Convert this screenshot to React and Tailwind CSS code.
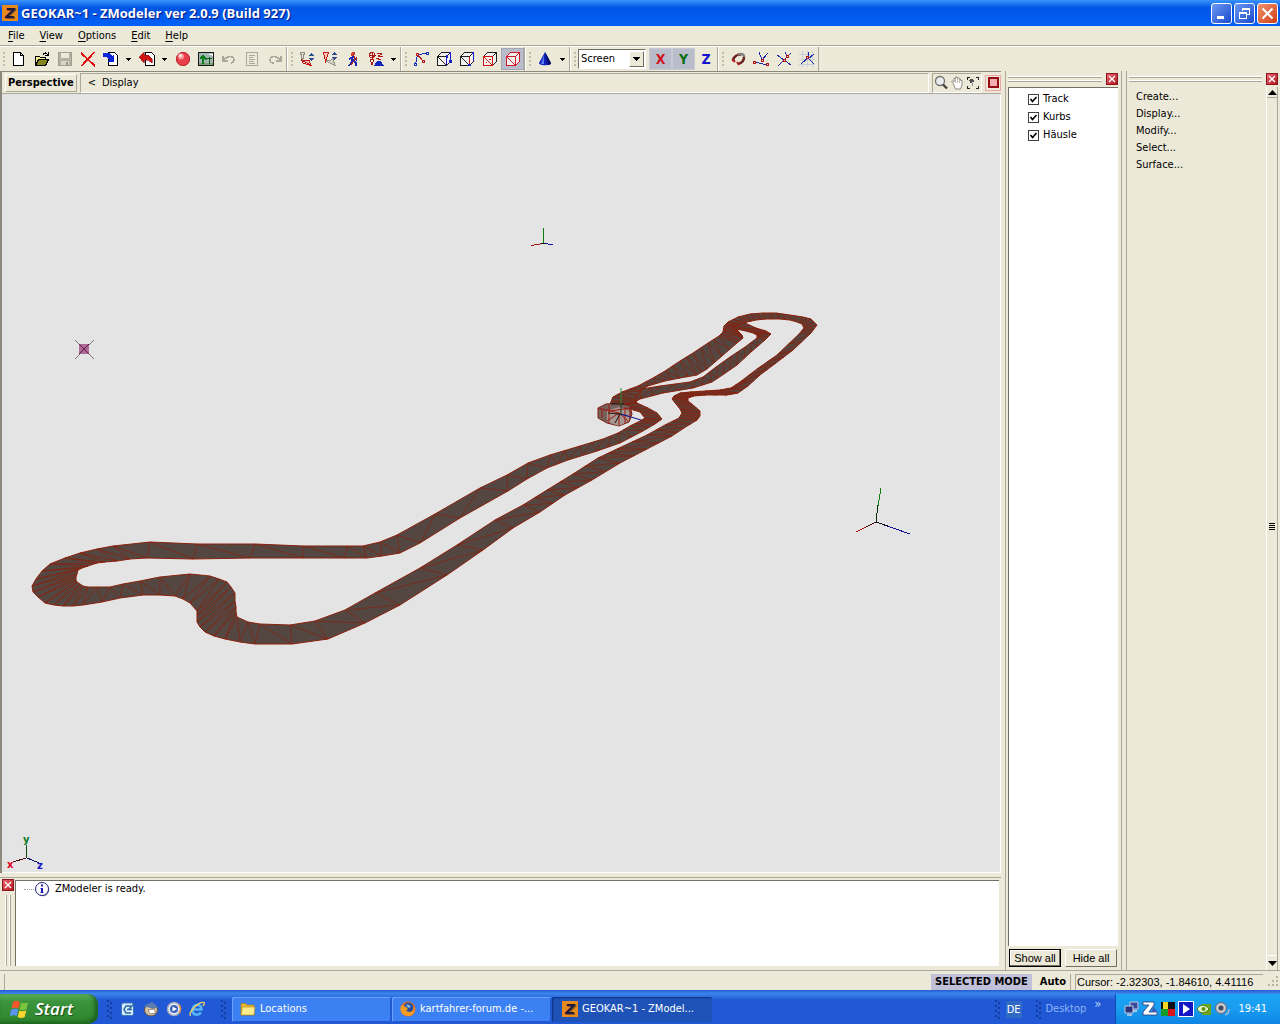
import { useState } from "react";
import { clsx } from "clsx";

/* ---------- track geometry: [left x, left y, right x, right y] ---------- */

const mainLoop = [
  [733, 331, 723, 332], [739, 328, 724, 326], [743, 325, 728, 322], [747, 322, 738, 317],
  [756, 320, 750, 314], [766, 319, 763, 313], [780, 319, 776, 313], [790, 320, 790, 315],
  [797, 322, 803, 317], [802, 324, 811, 319], [804, 328, 817, 325], [799, 334, 811, 333],
  [777, 355, 793, 350], [757, 369, 776, 363], [740, 382, 760, 375], [731, 388, 748, 386],
  [720, 390, 738, 393], [705, 391, 727, 395], [690, 392, 706, 395], [680, 393, 694, 396],
  [674, 396, 688, 398], [672, 399, 688, 401], [676, 404, 693, 405], [680, 409, 700, 411],
  [682, 413, 700, 416], [679, 418, 697, 420], [665, 425, 684, 428], [647, 435, 672, 436],
  [617, 449, 647, 449], [598, 458, 620, 463], [573, 474, 592, 480], [547, 490, 565, 495],
  [523, 505, 540, 512], [495, 520, 513, 528], [457, 545, 483, 550], [420, 568, 447, 575],
  [375, 593, 400, 605], [345, 610, 365, 623], [315, 621, 328, 639], [290, 625, 292, 644],
  [260, 624, 255, 644], [248, 622, 240, 642], [237, 617, 225, 639], [236, 612, 214, 636],
  [236, 607, 205, 632], [235, 601, 200, 627], [235, 593, 197, 622], [231, 587, 197, 616],
  [227, 582, 197, 611], [219, 579, 190, 603], [210, 576, 183, 599], [190, 574, 175, 596],
  [160, 577, 160, 595], [140, 581, 143, 595], [123, 584, 120, 598], [110, 587, 102, 602],
  [97, 587, 83, 605], [88, 587, 73, 606], [83, 586, 63, 606], [80, 584, 54, 605],
  [77, 582, 45, 603], [76, 580, 38, 597], [76, 577, 33, 592], [77, 574, 32, 586],
  [78, 570, 36, 579], [82, 568, 42, 571], [88, 566, 50, 564], [97, 563, 65, 558],
  [105, 562, 80, 553], [117, 561, 97, 549], [130, 559, 113, 546], [147, 558, 150, 542],
  [193, 559, 197, 544], [250, 558, 255, 544], [303, 558, 303, 546], [345, 558, 347, 546],
  [367, 558, 363, 546], [382, 556, 380, 542], [400, 553, 397, 535], [420, 543, 435, 514],
  [460, 518, 480, 488], [508, 491, 507, 475], [527, 479, 528, 463], [547, 468, 550, 455],
  [568, 460, 580, 446], [597, 451, 603, 439], [620, 443, 618, 433], [643, 431, 630, 426],
  [655, 424, 640, 421], [662, 419, 645, 418], [657, 413, 640, 412], [648, 408, 627, 408],
  [637, 403, 610, 405], [632, 399, 613, 397],
];

const pitStraight = [
  [610, 405, 637, 403], [613, 397, 634, 399], [622, 392, 640, 391], [638, 386, 648, 386],
  [653, 378, 665, 381], [665, 371, 680, 378], [680, 361, 697, 375], [693, 353, 707, 369],
  [708, 343, 722, 356], [719, 336, 737, 343], [723, 332, 743, 338], [726, 328, 742, 335],
  [730, 325, 738, 331],
];

const infield = [
  [632, 394, 632, 404], [642, 389, 640, 399], [660, 386, 663, 393], [690, 382, 693, 388],
  [703, 377, 712, 382], [716, 367, 724, 374], [730, 357, 737, 365], [745, 347, 751, 352],
  [757, 338, 765, 340], [757, 335, 771, 334], [753, 333, 766, 331], [742, 330, 756, 328],
  [730, 329, 745, 323],
];

function Strip({ pairs }) {
  const left = pairs.map((p) => `${p[0]},${p[1]}`);
  const right = pairs.map((p) => `${p[2]},${p[3]}`);
  const outline = [...left, ...[...right].reverse()].join(" ");
  let zigzag = "";
  pairs.forEach((p, i) => {
    zigzag += `${p[0]},${p[1]} ${p[2]},${p[3]} `;
    // split the long quads once more so the far part looks denser
    const next = pairs[i + 1];
    if (next && p[0] > 540 && p[1] < 500) {
      const mx = (p[0] + next[0]) / 2;
      const my = (p[1] + next[1]) / 2;
      zigzag += `${mx},${my} ${(p[2] + next[2]) / 2},${(p[3] + next[3]) / 2} `;
    }
  });
  return (
    <g stroke="#8a200c" strokeWidth="1" strokeLinejoin="round">
      <polygon points={outline} fill="#544741" />
      <polyline points={zigzag} fill="none" strokeWidth="0.7" />
    </g>
  );
}

function Scene() {
  return (
    <svg viewBox="2 94 998 778" className="block h-full w-full" role="img" aria-label="Perspective view">
      <Strip pairs={mainLoop} />
      <Strip pairs={infield} />
      <Strip pairs={pitStraight} />

      {/* building */}
      <path d="M632 413l9 1 1 5-8-1z" fill="#e4e4e4" />
      <path d="M598 408l8-4 14-1 10 3 2 8-3 8-10 4-12-3-9-5z" fill="#75615a" stroke="#801c10" />
      <path d="M607 411l12-4 11 4-1 10-10 5-12-4z" fill="#a89791" />
      <path d="M598 408l12 3 20-3M609 405v18M619 426v-13l-12 8M619 413l-13-3M619 413l10 9M630 408v12M602 409v9M625 407v17" fill="none" stroke="#9c1a12" />
      <path d="M611 404h13M608 413l11 1 9 2M620 414l-5 9" fill="none" stroke="#1c1410" />
      <path d="M621 388v16" stroke="#2c8a2c" />
      <path d="M621 404v10" stroke="#123c12" />
      <path d="M621 414l20 6" stroke="#20209a" strokeWidth="1.3" />

      {/* lights and helpers */}
      <g fill="none" shapeRendering="crispEdges">
        <path d="M543.5 228v15" stroke="#0c7a0c" />
        <path d="M531 245.500l12-2" stroke="#a01414" />
        <path d="M543 243.500l10 1" stroke="#1414a0" />
        <path d="M541 243.500h5" stroke="#101010" />
        <path d="M881 488l-3 18" stroke="#108010" />
        <path d="M878 505l-2 17" stroke="#0c300c" />
        <path d="M876 522l-20 10" stroke="#b01414" />
        <path d="M876 522l-10 5" stroke="#3c1010" />
        <path d="M876 522l34 12" stroke="#101090" />
        <path d="M876 522l12 4" stroke="#101020" />
      </g>
      <rect x="79" y="344" width="10" height="10" fill="#b06a97" />
      <path d="M75 340l19 19M94 340l-19 19" stroke="#85707c" />
      <path d="M79 344l10 10M89 344l-10 10" stroke="#6c1c54" />

      {/* axis tripod */}
      <g fill="none" shapeRendering="crispEdges">
        <path d="M26.500 845v13" stroke="#104810" />
        <path d="M26 858l-13 4" stroke="#501010" />
        <path d="M27 858l12 5" stroke="#101060" />
      </g>
      <g className="font-['DejaVu_Sans'] text-[10px] font-bold">
        <text x="23" y="843" fill="#0a7a1e">y</text>
        <text x="7" y="868" fill="#e0001c">x</text>
        <text x="37" y="869" fill="#1414c8">z</text>
      </g>
    </svg>
  );
}

/* ---------- icons ---------- */

function Svg({ children, size = 16, crisp = true }) {
  return (
    <svg width={size} height={size} viewBox="0 0 16 16" fill="none" className="shrink-0" shapeRendering={crisp ? "crispEdges" : "auto"} aria-hidden="true">
      {children}
    </svg>
  );
}

const Page = () => <path d="M2.500 1.500h7l3 3v10h-10zM9.500 1.500v3h3" fill="#fff" stroke="#000" />;

const Cube = ({ c = "#202020", e = "#1818c8" }) => (
  <>
    <path d="M1.500 5.500l4-4h9v9l-4 4h-9z" fill="#f4f2ec" stroke={c} />
    <path d="M1.500 5.500h9v9M10.500 5.500l4-4M1.500 5.500l9 9" stroke={c} />
    <path d="M10.500 6v8M14.500 2v8" stroke={e} />
  </>
);

const icons = {
  new: <Page />,
  open: (
    <>
      <path d="M1.500 14.500v-9h4l1 1h5v2" fill="#f6f08c" stroke="#000" />
      <path d="M1.500 14.500l3-6h10l-3 6z" fill="#86841c" stroke="#000" />
      <path d="M9 3.500c2-3 4-1 5 1M14.500 1v3.500H11" stroke="#000" />
    </>
  ),
  save: (
    <>
      <path d="M1.500 1.500h13v13h-13z" fill="#b4b1a2" stroke="#a09d8f" />
      <path d="M4 2h8v5H4z" fill="#ece9d8" />
      <path d="M4 10h8v4H4z" fill="#d8d5c6" />
      <path d="M9 11h2v3H9z" fill="#9a978a" />
    </>
  ),
  del: <path d="M1 2l14 13M14.500 1L1.500 15" stroke="#e01010" strokeWidth="1.800" />,
  imp: (
    <>
      <path d="M5.500 1.500h6l3 3v10h-9z" fill="#fff" stroke="#000" />
      <path d="M0 2h6l3 3 2-2v8H4l2-2-2-3H0z" fill="#0c28d8" />
    </>
  ),
  exp: (
    <>
      <path d="M6.500 1.500h6l3 3v10h-9z" fill="#fff" stroke="#000" />
      <path d="M0 6l5-5v3h4l4 4v4l-4-3H5v3z" fill="#d01414" stroke="#801010" strokeWidth=".6" />
    </>
  ),
  sphere: (
    <>
      <circle cx="8" cy="8" r="7" fill="#e8404a" />
      <circle cx="8" cy="8" r="6.500" stroke="#b8242c" />
      <circle cx="6" cy="5.500" r="3" fill="#fc9c9c" />
      <circle cx="5.500" cy="4.500" r="1.300" fill="#fff" />
    </>
  ),
  env: (
    <>
      <path d="M.5 1.500h15v13H.5z" fill="#a4b4b0" stroke="#181818" />
      <path d="M1 12h14v2H1z" fill="#7c9c74" />
      <path d="M5 4v9M2 8l3-3 4 4" stroke="#0c7c1c" strokeWidth="2" />
      <path d="M11.500 6v7M9 8l3-1 2 1" stroke="#0c5c1c" />
      <path d="M11 3h3v2" stroke="#fff" />
    </>
  ),
  undo: <path d="M2 5v5h5M2.500 9.500C5 6 10 4 12.500 7c1.500 3-.5 5-3 5" stroke="#aca899" strokeWidth="1.500" />,
  redo: <path d="M14 5v5H9M13.500 9.500C11 6 6 4 3.500 7c-1.500 3 .5 5 3 5" stroke="#aca899" strokeWidth="1.500" />,
  doc: <path d="M2.500 1.500h11v13h-11zM5 4.500h6M5 6.500h4M5 8.500h6M5 10.500h5M5 12.500h6" stroke="#aca899" />,
  boneA: (
    <>
      <path d="M1.500 1.500h4l-2 8z" fill="#dcd8cc" stroke="#98918a" />
      <path d="M3 9l9 5.500-2-5z" fill="#f4c4bc" stroke="#c41414" />
      <path d="M2 8l2 4 9 3" stroke="#c41414" />
      <path d="M9 5l3-3 3 3zM9 7h6l-3 3z" fill="#2c4c8c" />
    </>
  ),
  boneB: (
    <>
      <path d="M1.500 1.500h5l-3 9z" fill="#f4c4bc" stroke="#c41414" />
      <path d="M4 10l9 4.500-2-6z" fill="#dcd8cc" stroke="#98958a" />
      <path d="M9 4l3-3 3 3zM9 6h6l-3 3z" fill="#2c4c8c" />
    </>
  ),
  walk: (
    <>
      <circle cx="8" cy="3" r="2" fill="#d03c30" />
      <path d="M8 5L7 10l-3 5M8 9l3 3v3M4 8l4-2 4 3" stroke="#1824b0" strokeWidth="1.600" />
      <path d="M9 5v5l-3 4M11 6l1 3" stroke="#c42018" />
    </>
  ),
  anim: (
    <>
      <circle cx="4" cy="4" r="2.500" stroke="#b01818" />
      <path d="M1 4h7M4 1v7M9 2l5 1-4 2 5 1M2 8h4l-2 6zM8 7l5 2" stroke="#b01818" />
      <path d="M6 15l3-5h4l3 5z" fill="#1428c0" />
    </>
  ),
  verts: (
    <>
      <path d="M2.500 13.500l2-10 9-1" stroke="#1830b8" />
      <path d="M4 3l6 7" stroke="#b01414" />
      <path d="M1.500 12.500h2v2h-2zM13.500 1.500h2v2h-2z" fill="#fff" stroke="#1830b8" />
      <path d="M3.500 2.500h2v2h-2zM9.500 9.500h2v2h-2z" fill="#f8dcd0" stroke="#c01414" />
    </>
  ),
  cubeV: (
    <>
      <Cube />
      <path d="M10 4h2v3h-2zM13 1h2v2h-2zM13 9h3v3h-3z" fill="#1824c8" />
    </>
  ),
  cubeE: (
    <>
      <Cube />
      <path d="M10.500 6v8" stroke="#d01414" />
      <path d="M13 1h2v2h-2zM9 13h3v2H9z" fill="#1824c8" />
    </>
  ),
  cubeF: (
    <>
      <Cube e="#202020" />
      <path d="M1.500 5.500h9v9h-9zl9 9M4 11h1M7 8h2" stroke="#d01414" />
    </>
  ),
  cubeO: <Cube c="#d4182c" e="#d4182c" />,
  cone: (
    <>
      <path d="M8 1L2 12c0 3 12 3 12 0z" fill="#1020b8" />
      <path d="M7 4L4 13h3z" fill="#5c7cf4" />
      <path d="M8 1l6 11c0 1-1 2-3 2z" fill="#060c60" />
    </>
  ),
  magnet: (
    <>
      <path d="M4 10c-2-2 1-5 4-6 1-1 2-1 2 1M8 13c4-1 6-4 6-7" stroke="#6c2420" strokeWidth="2.500" />
      <path d="M8 4c3-2 6-1 6 2" stroke="#84807c" strokeWidth="2.500" />
      <path d="M2 8l3 3M7 11l2 3" stroke="#b02420" strokeWidth="2" />
      <path d="M5 8l3-3" stroke="#e8e4e0" />
    </>
  ),
  snapV: (
    <>
      <path d="M6 1l3 8 6-7M2 11l12 3" stroke="#1c28a8" />
      <path d="M8.500 8.500h2v2h-2zM.5 10.500h2v2h-2zM13.500 12.500h2v2h-2z" fill="#f8dcd0" stroke="#b01414" />
    </>
  ),
  snapE: (
    <>
      <path d="M1 4l14 10M2 15L15 2M9 1l3 5" stroke="#1c28a8" />
      <path d="M7.500 8.500h2v2h-2zM10.500 4.500h2v2h-2z" fill="#f8dcd0" stroke="#b01414" />
    </>
  ),
  snapG: (
    <>
      <path d="M0 3.500h16M0 8.500h16M0 13.500h16M3.500 0v16M8.500 0v16M13.500 0v16" stroke="#c8cfdc" />
      <path d="M9 1v6l6 6M9 7l-7 6M15 3L9 8" stroke="#1c28a8" />
      <path d="M7.500 5.500h2v2h-2z" fill="#f8dcd0" stroke="#b01414" />
    </>
  ),
};

function ZLogo() {
  return (
    <span className="grid size-4 shrink-0 place-items-center bg-[#e88a1c] font-['DejaVu_Sans'] text-[14px]/[16px] font-bold italic text-[#221a3c] [text-shadow:1px_1px_0_#8c5428]">
      Z
    </span>
  );
}

function CloseX({ label }) {
  return (
    <button aria-label={label} className="grid size-3 shrink-0 place-items-center border border-[#8c1420] bg-linear-to-br from-[#e8606c] to-[#b4101c]">
      <svg width="8" height="8" viewBox="0 0 8 8" aria-hidden="true">
        <path d="M1 1l6 6M7 1L1 7" stroke="#fff" strokeWidth="1.400" />
      </svg>
    </button>
  );
}

/* ---------- toolbar ---------- */

const toolbarGroups = [
  ["new", "open", "save", "del", "imp", "v", "exp", "v", "sphere", "env", "undo", "doc", "redo"],
  ["boneA", "boneB", "walk", "anim", "v"],
  ["verts", "cubeV", "cubeE", "cubeF", "cubeO"],
  ["cone", "v"],
];

function Group({ children, first }) {
  return (
    <div className={clsx("flex h-full items-center border-r border-[#aca899]", !first && "border-l border-l-white")}>
      <span className="flex w-[7px] flex-col items-center gap-[2px]">
        {[0, 1, 2, 3].map((i) => (
          <i key={i} className="size-[2px] bg-[#c0bca8]" />
        ))}
      </span>
      {children}
    </div>
  );
}

function Tool({ name, pressed }) {
  if (name === "v") {
    return (
      <button aria-label="More" className="grid h-full w-[13px] place-items-center">
        <svg width="5" height="3" viewBox="0 0 5 3" shapeRendering="crispEdges" aria-hidden="true">
          <path d="M0 0h5L2.500 3z" fill="#000" />
        </svg>
      </button>
    );
  }
  return (
    <button aria-label={name} className={clsx("grid h-[22px] w-[23px] place-items-center", pressed && "border border-[#a4a8b4] bg-[#b9bdcb]")}>
      <Svg crisp={name !== "sphere" && name !== "cone" && name !== "magnet"}>{icons[name]}</Svg>
    </button>
  );
}

function Toolbar() {
  const [space, setSpace] = useState("Screen");
  return (
    <div className="flex h-[25px] items-center border-t border-white">
      {toolbarGroups.map((names, i) => (
        <Group key={i} first={i === 0}>
          {names.map((n, j) => (
            <Tool key={j} name={n} pressed={n === "cubeO"} />
          ))}
        </Group>
      ))}
      <Group>
        <div className="relative mr-[3px]">
          <select
            aria-label="Coordinate space"
            value={space}
            onChange={(e) => setSpace(e.target.value)}
            className="block h-5 w-[68px] appearance-none border border-t-[#716f64] border-r-white border-b-white border-l-[#716f64] bg-white pl-[2px] text-[11px]/[16px]"
          >
            <option>Screen</option>
            <option>World</option>
          </select>
          <span className="pointer-events-none absolute top-[2px] right-[2px] grid h-4 w-[15px] place-items-center border border-t-white border-r-[#716f64] border-b-[#716f64] border-l-white bg-[#ece9d8]">
            <svg width="7" height="4" viewBox="0 0 7 4" shapeRendering="crispEdges" aria-hidden="true">
              <path d="M0 0h7L3.500 4z" fill="#000" />
            </svg>
          </span>
        </div>
        <button className="h-[22px] w-[23px] border border-[#c8cad4] bg-[#b9bdcb] font-['DejaVu_Sans_Condensed'] text-[14px]/[20px] font-bold text-[#d0101c]">X</button>
        <button className="h-[22px] w-[23px] border border-[#c8cad4] bg-[#b9bdcb] font-['DejaVu_Sans_Condensed'] text-[14px]/[20px] font-bold text-[#0c6c14]">Y</button>
        <button className="h-[22px] w-[22px] font-['DejaVu_Sans_Condensed'] text-[14px]/[20px] font-bold text-[#1414d0]">Z</button>
      </Group>
      <Group>
        {["magnet", "snapV", "snapE", "snapG"].map((n) => (
          <Tool key={n} name={n} />
        ))}
      </Group>
    </div>
  );
}

/* ---------- window parts ---------- */

function TitleBar() {
  const btn = "grid size-[21px] place-items-center rounded-[3px] border border-white";
  return (
    <header className="flex h-[26px] items-center gap-[2px] bg-linear-to-b from-[#3c94fc] via-[#0054e3] via-30% to-[#0461f8] px-[2px]">
      <ZLogo />
      <h1 className="grow pl-px font-['Open_Sans'] text-[13px]/[20px] font-bold whitespace-nowrap text-white [text-shadow:1px_1px_1px_#0a1883]">
        GEOKAR~1 - ZModeler ver 2.0.9 (Build 927)
      </h1>
      <button aria-label="Minimize" className={clsx(btn, "bg-linear-to-br from-[#6c98f4] to-[#1c48cc]")}>
        <svg width="13" height="13" viewBox="0 0 13 13" shapeRendering="crispEdges"><path d="M2 9h7v3H2z" fill="#fff" /></svg>
      </button>
      <button aria-label="Restore" className={clsx(btn, "bg-linear-to-br from-[#6c98f4] to-[#1c48cc]")}>
        <svg width="13" height="13" viewBox="0 0 13 13" fill="none" stroke="#fff" shapeRendering="crispEdges">
          <path d="M4.500 4V1.500h7v6H9M4 2h8M1.500 5.500h7v6h-7zM1 6h8" />
        </svg>
      </button>
      <button aria-label="Close" className={clsx(btn, "bg-linear-to-br from-[#f0906c] to-[#d03c10]")}>
        <svg width="13" height="13" viewBox="0 0 13 13" stroke="#fff" strokeWidth="2"><path d="M1.500 1.500l10 10M11.500 1.500l-10 10" /></svg>
      </button>
    </header>
  );
}

function MenuBar() {
  return (
    <nav className="flex h-5 items-center gap-[15px] border-b border-[#aca899] pt-px pl-2">
      {["File", "View", "Options", "Edit", "Help"].map((m) => (
        <button key={m}>
          <u className="underline-offset-2">{m[0]}</u>
          {m.slice(1)}
        </button>
      ))}
    </nav>
  );
}

function ViewHeader() {
  return (
    <div className="flex h-[22px] shrink-0 items-center border-b border-[#aca899]">
      <button className="ml-[3px] h-[18px] border border-t-white border-r-[#aca899] border-b-[#aca899] border-l-white px-[2px] leading-4 font-bold">
        Perspective
      </button>
      <div className="ml-[3px] flex h-5 grow items-center gap-[6px] border border-t-[#aca899] border-r-white border-b-white border-l-[#aca899] pl-[7px]">
        <span>&lt;</span>
        <button>Display</button>
      </div>
      <div className="ml-[3px] flex h-5 items-center border border-t-[#aca899] border-r-white border-b-white border-l-[#aca899]">
        <button aria-label="Zoom">
          <Svg crisp={false}>
            <circle cx="7" cy="6" r="4.500" fill="#e8eef0" stroke="#70706c" strokeWidth="1.300" />
            <path d="M10 9.500l4 4" stroke="#444" strokeWidth="2.400" />
          </Svg>
        </button>
        <button aria-label="Pan">
          <Svg crisp={false}>
            <path d="M4.500 9L2.500 6.500l1-.8L5 7V3.500h1.500V2H8v1h2v1h1.500v1.500H13V10l-1.500 4h-5z" fill="#fff" stroke="#8c8a80" />
            <path d="M6.500 3.500V8M8.500 3v5M10.500 4v4" stroke="#a8a69a" strokeWidth=".8" />
          </Svg>
        </button>
        <button aria-label="Fit">
          <Svg>
            <path d="M2.500 5V2.500H5M11 2.500h2.500V5M13.500 11v2.500H11M5 13.500H2.500V11" stroke="#202020" />
            <path d="M4 5l2-1 3 1v2H7l-1 2z" fill="#505050" />
            <path d="M7.500 8v3" stroke="#909090" />
          </Svg>
        </button>
      </div>
      <button aria-label="Maximize view" className="ml-[3px] grid size-4 place-items-center border border-[#e8a8a8]">
        <span className="size-[11px] border-2 border-[#980c14] bg-[#f0b0b0]" />
      </button>
    </div>
  );
}

function Grooves() {
  return (
    <div className="flex grow flex-col gap-[2px]">
      <i className="h-[2px] border-t border-b border-t-white border-b-[#aca899]" />
      <i className="h-[2px] border-t border-b border-t-white border-b-[#aca899]" />
    </div>
  );
}

function LogPane() {
  return (
    <section className="flex h-[93px] shrink-0 border-t border-[#aca899]">
      <div className="flex w-[15px] flex-col items-center gap-1 pt-px">
        <CloseX label="Close log" />
        <div className="mb-1 flex grow gap-[2px]">
          <i className="w-[2px] border-r border-l border-r-[#aca899] border-l-white" />
          <i className="w-[2px] border-r border-l border-r-[#aca899] border-l-white" />
        </div>
      </div>
      <ul className="mt-[2px] mr-[2px] mb-1 grow border-t border-l border-[#716f64] bg-white">
        <li className="flex h-4 items-center pl-2">
          <i className="w-[10px] border-t border-dotted border-[#a0a0a0]" />
          <svg width="16" height="16" viewBox="0 0 16 16" aria-hidden="true">
            <circle cx="8.800" cy="8.800" r="6.500" fill="#9090b8" />
            <circle cx="8" cy="8" r="6.500" fill="#fff" stroke="#20207c" />
            <path d="M7 3.500h2v2H7zM6.500 7H9v5H7V8h-.5zM6.500 11h3v1h-3z" fill="#1c1cb4" />
          </svg>
          <span className="pl-[5px]">ZModeler is ready.</span>
        </li>
      </ul>
    </section>
  );
}

function ObjectPanel() {
  const [shown, setShown] = useState({ Track: true, Kurbs: true, Häusle: true });
  const setAll = (on) => setShown({ Track: on, Kurbs: on, Häusle: on });
  return (
    <aside className="flex w-[117px] shrink-0 flex-col border-r border-l border-[#aca899] pr-[3px] pl-[2px]">
      <div className="flex h-4 items-center gap-1">
        <Grooves />
        <CloseX label="Close objects" />
      </div>
      <ul className="flex grow flex-col border-t border-l border-[#716f64] bg-white pt-[2px] pl-[19px]">
        {Object.keys(shown).map((name) => (
          <li key={name}>
            <label className="flex h-[18px] items-center gap-1">
              <span className="grid">
                <input
                  type="checkbox"
                  checked={shown[name]}
                  onChange={() => setShown({ ...shown, [name]: !shown[name] })}
                  className="col-start-1 row-start-1 size-[11px] appearance-none border border-[#404040] bg-white"
                />
                {shown[name] && (
                  <svg viewBox="0 0 11 11" className="pointer-events-none col-start-1 row-start-1 size-[11px]">
                    <path d="M2.500 5l2 2.500L8.500 3" fill="none" stroke="#000" strokeWidth="1.600" />
                  </svg>
                )}
              </span>
              {name}
            </label>
          </li>
        ))}
      </ul>
      <div className="flex h-6 items-center gap-1 px-px">
        <button onClick={() => setAll(true)} className="h-[18px] flex-1 border border-black font-['Liberation_Sans'] leading-4 whitespace-nowrap shadow-[inset_-1px_-1px_0_#716f64,inset_1px_1px_0_#fff]">
          Show all
        </button>
        <button onClick={() => setAll(false)} className="h-[18px] flex-1 border border-t-white border-r-[#716f64] border-b-[#716f64] border-l-white font-['Liberation_Sans'] leading-4 whitespace-nowrap">
          Hide all
        </button>
      </div>
    </aside>
  );
}

function CommandPanel() {
  return (
    <aside className="flex w-[154px] shrink-0 flex-col border-l border-[#aca899] pl-[2px]">
      <div className="flex h-4 items-center gap-1 pr-[2px]">
        <Grooves />
        <CloseX label="Close commands" />
      </div>
      <div className="flex grow">
        <ul className="grow pt-px pl-[7px]">
          {["Create...", "Display...", "Modify...", "Select...", "Surface..."].map((c) => (
            <li key={c} className="h-[17px]">
              <button className="leading-[17px]">{c}</button>
            </li>
          ))}
        </ul>
        <div className="mr-[2px] flex w-3 flex-col items-center justify-between border-r border-l border-r-[#aca899] border-l-white">
          <button aria-label="Scroll up" className="grid h-[11px] w-full place-items-center border-b border-[#aca899]">
            <svg width="9" height="5" viewBox="0 0 9 5"><path d="M0 5h9L4.500 0z" /></svg>
          </button>
          <span className="flex flex-col gap-px">
            <i className="h-px w-[6px] bg-black" />
            <i className="h-px w-[6px] bg-black" />
            <i className="h-px w-[6px] bg-black" />
            <i className="h-px w-[6px] bg-black" />
          </span>
          <button aria-label="Scroll down" className="grid h-[15px] w-full place-items-center border-t border-white">
            <svg width="9" height="5" viewBox="0 0 9 5"><path d="M0 0h9L4.500 5z" /></svg>
          </button>
        </div>
      </div>
    </aside>
  );
}

function StatusBar() {
  return (
    <footer className="flex h-5 items-center justify-end gap-1 border-t border-[#aca899] pt-[2px] pl-1">
      <i className="mr-auto h-4 border-l border-[#aca899]" />
      <span className="h-4 bg-[#c0c0d8] px-1 leading-4 font-bold">SELECTED MODE</span>
      <button className="h-4 border-r border-[#aca899] px-1 leading-4 font-bold">Auto</button>
      <span className="h-4 w-[188px] border-t border-l border-[#aca899] pl-px font-['Liberation_Sans'] leading-[14px] whitespace-nowrap">
        Cursor: -2.32303, -1.84610, 4.41116
      </span>
      <svg width="13" height="13" viewBox="0 0 13 13" fill="#b8b4a2" aria-hidden="true">
        <path d="M9 1h2v2H9zM9 5h2v2H9zM9 9h2v2H9zM5 5h2v2H5zM5 9h2v2H5zM1 9h2v2H1z" />
      </svg>
    </footer>
  );
}

/* ---------- taskbar ---------- */

function TaskGrip() {
  return (
    <svg width="7" height="20" viewBox="0 0 7 20" fill="#143c9c" shapeRendering="crispEdges" className="shrink-0" aria-hidden="true">
      <path d="M1 1h2v2H1zM1 6h2v2H1zM1 11h2v2H1zM1 16h2v2H1zM4 3h2v2H4zM4 8h2v2H4zM4 13h2v2H4zM4 18h2v2H4z" />
    </svg>
  );
}

const Folder = () => (
  <Svg crisp={false}>
    <path d="M1 2.500h5l1 1.500h7v10H1z" fill="#e8b830" stroke="#a47c14" strokeWidth=".6" />
    <path d="M1 14l1.500-8H15l-1 8z" fill="#fcec8c" stroke="#b48c1c" strokeWidth=".6" />
  </Svg>
);

const Firefox = () => (
  <Svg crisp={false}>
    <circle cx="8" cy="8" r="7.500" fill="#e8701c" />
    <circle cx="8.500" cy="6.500" r="5" fill="#284c9c" />
    <path d="M6 4c2-1 4 0 5 2l-3 1z" fill="#7cb4e0" />
    <path d="M1 5c2-1 3 0 5 1l2 2-2 2 4 1c3 0 4-3 3-6 3 4 1 10-5 10S-.5 10 1 5z" fill="#f49c24" />
  </Svg>
);

const quickIcons = [
  ["Show desktop", <>
    <rect x="1.500" y="2" width="12" height="12.500" rx="2" fill="#d8ecfc" stroke="#3c78b8" />
    <path d="M11 5H6L4 8.500 6 12h5M7 8.500h5M15 2l-6 6" stroke="#2868a8" strokeWidth="1.500" />
  </>],
  ["Mail", <>
    <ellipse cx="8" cy="9" rx="6.500" ry="6" fill="#d8c4a4" stroke="#5c5044" />
    <path d="M1 5l8-4 6 5-5 2z" fill="#5c7cac" />
    <path d="M5 9l6-1 2 4-6 1z" fill="#fff" stroke="#806848" strokeWidth=".7" />
  </>],
  ["Media player", <>
    <circle cx="8" cy="8" r="6.500" fill="#e8ecf4" stroke="#9ca8c0" strokeWidth="1.500" />
    <circle cx="8" cy="8" r="4" fill="#3860b8" />
    <path d="M6.500 5.500L11 8l-4.500 2.500z" fill="#fff" />
    <path d="M13 4a6 6 0 010 8" stroke="#e8842c" strokeWidth="1.400" />
  </>],
  ["Internet Explorer", <>
    <path d="M3.500 8.500h9c0-6-8-6-9 0-.5 6 6 6.500 8.500 3" stroke="#58b4f4" strokeWidth="2.600" />
    <path d="M1.500 15C-1 11 10 0 15 1.500c1 .8 0 2-1 3.500" stroke="#f0d45c" strokeWidth="1.300" />
  </>],
];

const trayIcons = [
  ["Network", <>
    <path d="M6 1h8v7H6z" fill="#3c4c9c" stroke="#c4cce4" />
    <path d="M1 5h8v7H1z" fill="#28347c" stroke="#c4cce4" />
    <path d="M3 14h5M9 10h4" stroke="#d0d4e0" strokeWidth="1.500" />
  </>],
  ["ZoneAlarm", <>
    <path d="M1 1h11v3L7 11h8v3H1v-3l6-7H1z" fill="#fff" stroke="#283878" strokeWidth=".8" />
    <path d="M11 5l4 6h-5z" fill="#3c5cb0" />
  </>],
  ["Antivirus", <>
    <path d="M1 1h7v7H1z" fill="#f4d41c" /><path d="M8 1h7v7H8z" fill="#101010" />
    <path d="M1 8h7v7H1z" fill="#149c28" /><path d="M8 8h7v7H8z" fill="#d8141c" />
    <path d="M1 1h2v7H1z" fill="#101010" />
  </>],
  ["Player", <>
    <path d="M.5 .5h15v15H.5z" fill="#1418c4" stroke="#fff" />
    <path d="M5 3l7 5-7 5z" fill="#fff" />
  </>],
  ["NVIDIA", <>
    <path d="M6 3h9v11H6z" fill="#6ca41c" />
    <path d="M1 8c3-5 8-5 12 0-4 5-9 5-12 0z" fill="#e8f4c4" stroke="#4c7c14" />
    <circle cx="7.500" cy="8" r="2" fill="#5c9414" />
  </>],
  ["Volume", <>
    <circle cx="7" cy="7" r="5.500" fill="#c4c8d0" stroke="#606878" />
    <circle cx="7" cy="7" r="2.500" fill="#404858" />
    <path d="M11 14c3-1 4-3 4-6" stroke="#b4c4dc" strokeWidth="1.300" />
  </>],
];

function Taskbar() {
  const task = "flex h-[25px] w-[159px] items-center gap-1 rounded-[2px] pl-2 text-white shadow-[inset_1px_1px_0_#6ca0fc,inset_-1px_-1px_0_#2458c8]";
  return (
    <div className="flex h-[34px] shrink-0 items-center bg-linear-to-b from-[#245cd0] via-[#3c84ec] via-10% to-[#2158d6] to-30% pt-1 text-white">
      <button className="flex h-[30px] w-[98px] items-center gap-[5px] rounded-r-[10px] bg-linear-to-b from-[#5cac5c] via-[#3c943c] via-25% to-[#2c842c] pl-[10px] shadow-[inset_-3px_-2px_4px_#1c601c]">
        <svg width="20" height="20" viewBox="0 0 20 20" aria-hidden="true">
          <path d="M3 3c3-2 5-1 7 0L8.500 9.500C6 8.500 4 8.500 1.500 9.500z" fill="#f0582c" />
          <path d="M11 3.500c2 1 4 1 7 0L16.500 10.500c-3 1-5 1-7 0z" fill="#7cc43c" />
          <path d="M1.200 10.500c3-1 5-1 7 0L6.700 17c-2-1-4-1-7 0z" fill="#5c94f4" />
          <path d="M9.300 11.500c2 1 4 1 7 0L14.700 18c-3 1.500-5 1-7 0z" fill="#fcd42c" />
        </svg>
        <span className="font-['Open_Sans'] text-[17px]/[24px] font-semibold italic [text-shadow:1px_1px_1px_#184c18]">Start</span>
      </button>
      <div className="flex items-center gap-[7px] pl-2">
        <TaskGrip />
        <div className="flex gap-[7px]">
          {quickIcons.map(([label, art]) => (
            <button key={label} aria-label={label}>
              <Svg crisp={false}>{art}</Svg>
            </button>
          ))}
        </div>
        <span className="pl-2"><TaskGrip /></span>
      </div>
      <div className="flex gap-px pl-[5px]">
        <button className={clsx(task, "bg-[#3c81f3]")}><Folder />Locations</button>
        <button className={clsx(task, "bg-[#3c81f3]")}><Firefox />kartfahrer-forum.de -...</button>
        <button className="flex h-[25px] w-[160px] items-center gap-1 rounded-[2px] bg-[#1e52b7] pl-[10px] text-white shadow-[inset_1px_1px_1px_#103480]">
          <ZLogo />GEOKAR~1 - ZModel...
        </button>
      </div>
      <div className="ml-auto flex items-center">
        <TaskGrip />
        <button className="ml-[5px] h-[17px] bg-[#316ac5] px-px leading-[17px]">DE</button>
        <span className="pr-1 pl-[13px]"><TaskGrip /></span>
        <button className="text-[#8cb4f4]">Desktop</button>
        <button aria-label="More" className="pb-3 pl-2 text-[13px]/[13px] text-[#b4d0fc]">»</button>
      </div>
      <div className="ml-[14px] flex h-[30px] items-center gap-[2px] border-l border-[#0c4cac] bg-linear-to-b from-[#1ca4f4] via-[#189cf0] to-[#0f84e4] pr-[13px] pl-2">
        {trayIcons.map(([label, art]) => (
          <button key={label} aria-label={label}>
            <Svg crisp={false}>{art}</Svg>
          </button>
        ))}
        <time className="pl-[6px]">19:41</time>
      </div>
    </div>
  );
}

export default function App() {
  return (
    <div className="flex h-screen flex-col overflow-hidden bg-[#ece9d8] font-['DejaVu_Sans_Condensed','DejaVu_Sans',sans-serif] text-[11px]/[14px] text-black">
      <TitleBar />
      <MenuBar />
      <Toolbar />
      <main className="flex min-h-0 grow gap-1">
        <div className="flex min-w-0 grow flex-col gap-1">
          <section className="flex min-h-0 grow flex-col border-t border-l-2 border-[#8c897c]">
            <ViewHeader />
            <div className="min-h-0 grow border-r border-b border-white bg-[#e4e4e4]">
              <Scene />
            </div>
          </section>
          <LogPane />
        </div>
        <ObjectPanel />
        <CommandPanel />
      </main>
      <StatusBar />
      <Taskbar />
    </div>
  );
}
